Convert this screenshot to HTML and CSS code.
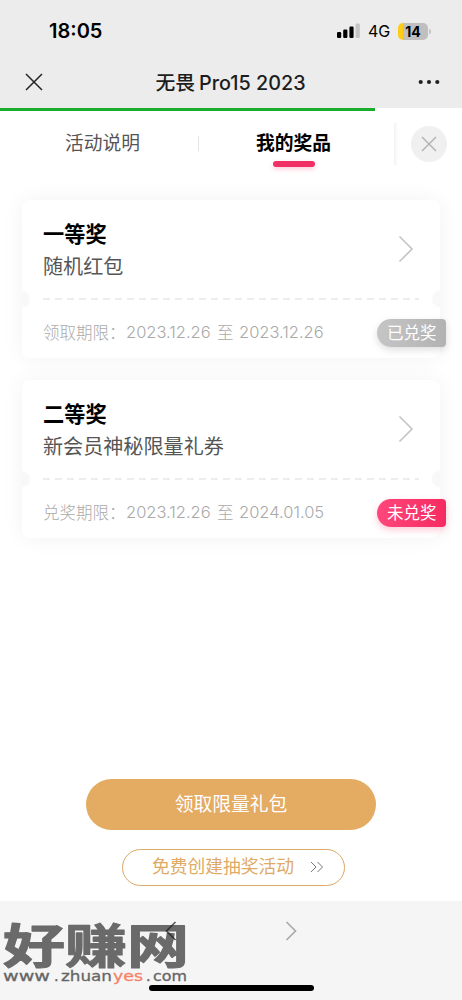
FILE: index.html
```
<!DOCTYPE html>
<html lang="zh-CN">
<head>
<meta charset="utf-8">
<meta name="viewport" content="width=device-width, initial-scale=1">
<title>无畏Pro15 2023</title>
<link rel="stylesheet" href="styles.css">
</head>
<body>
<div class="screen">
  <header class="top">
    <div class="status">
      <span class="clock">18:05</span>
      <div class="indicators">
        <svg class="signal" width="24" height="16" viewBox="0 0 24 16"><rect x="0" y="9" width="4.2" height="6" rx="1.2"/><rect x="6.2" y="6.5" width="4.2" height="8.5" rx="1.2"/><rect x="12.4" y="3.5" width="4.2" height="11.5" rx="1.2"/><rect class="weak" x="18.6" y="0.5" width="4.2" height="14.5" rx="1.2"/></svg>
        <span class="network">4G</span>
        <span class="battery">14</span><i class="battery-tip"></i>
      </div>
    </div>
    <nav class="nav">
      <svg class="nav-close" width="18" height="18" viewBox="0 0 18 18"><path d="M1 1L17 17M17 1L1 17"/></svg>
      <h1 class="title"><span>无畏</span><span class="latin">Pro15 2023</span></h1>
      <svg class="more" width="22" height="6" viewBox="0 0 22 6"><circle cx="2.7" cy="3" r="2.1"/><circle cx="11" cy="3" r="2.1"/><circle cx="19.3" cy="3" r="2.1"/></svg>
    </nav>
  </header>
  <div class="progress"><div class="progress-bar"></div></div>

  <div class="tabs">
    <div class="tab">活动说明</div>
    <div class="tab-divider"></div>
    <div class="tab active">我的奖品</div>
    <div class="close-area"><button class="close"><svg width="16" height="16" viewBox="0 0 16 16"><path d="M1 1L15 15M15 1L1 15"/></svg></button></div>
  </div>

  <main class="list">
    <article class="ticket">
      <div class="prize">
        <div><h2>一等奖</h2><p>随机红包</p></div>
        <svg class="chevron" width="16" height="28" viewBox="0 0 16 28"><path d="M1.5 1.5L14 14L1.5 26.5"/></svg>
      </div>
      <div class="tear"><svg width="376" height="2" viewBox="0 0 376 2"><path d="M0 1H376"/></svg></div>
      <div class="validity"><span class="label">领取期限：</span><span class="date">2023.12.26</span><span class="to">至</span><span class="date">2023.12.26</span><b class="badge used">已兑奖</b></div>
    </article>
    <article class="ticket">
      <div class="prize">
        <div><h2>二等奖</h2><p>新会员神秘限量礼券</p></div>
        <svg class="chevron" width="16" height="28" viewBox="0 0 16 28"><path d="M1.5 1.5L14 14L1.5 26.5"/></svg>
      </div>
      <div class="tear"><svg width="376" height="2" viewBox="0 0 376 2"><path d="M0 1H376"/></svg></div>
      <div class="validity"><span class="label">兑奖期限：</span><span class="date">2023.12.26</span><span class="to">至</span><span class="date">2024.01.05</span><b class="badge">未兑奖</b></div>
    </article>
  </main>

  <div class="actions">
    <button class="claim">领取限量礼包</button>
    <button class="create">免费创建抽奖活动<svg width="14" height="12" viewBox="0 0 14 12"><path d="M1 1L6 6L1 11M7.5 1L12.5 6L7.5 11"/></svg></button>
  </div>

  <footer class="toolbar">
    <svg class="watermark" width="200" height="78" viewBox="0 0 200 78">
      <g transform="translate(3 52.5) scale(1 .76)"><text class="mark" x="0" y="0" textLength="186" lengthAdjust="spacing">好赚网</text></g>
      <g class="site"><text x="3" y="71" textLength="47" lengthAdjust="spacingAndGlyphs">www</text><text x="54" y="71">.</text><text x="61" y="71" textLength="51" lengthAdjust="spacingAndGlyphs">zhuan</text><text class="accent" x="113" y="71" textLength="30" lengthAdjust="spacingAndGlyphs">yes</text><text x="146" y="71">.</text><text x="153" y="71" textLength="34" lengthAdjust="spacingAndGlyphs">com</text></g>
    </svg>
    <svg class="back" width="12" height="20" viewBox="0 0 12 20"><path d="M10.5 1L1.5 10L10.5 19"/></svg>
    <svg class="forward" width="12" height="20" viewBox="0 0 12 20"><path d="M1.5 1L10.5 10L1.5 19"/></svg>
    <div class="home-bar"></div>
  </footer>
</div>
</body>
</html>
```
FILE: styles.css
```
* { box-sizing: border-box; }
body { margin: 0; background: #fff; font-family: Inter, "Noto Sans CJK SC", sans-serif; }
h1, h2, p { margin: 0; }
button { margin: 0; padding: 0; border: 0; font: inherit; }
svg { display: block; fill: none; flex: none; }
.screen { width: 462px; height: 1000px; display: flex; flex-direction: column; overflow: hidden; }

.top { height: 108px; background: #ececec; }
.status { height: 56px; padding: 6px 32px 0 49px; display: flex; align-items: center; justify-content: space-between; }
.clock { font-size: 20px; font-weight: 600; line-height: 24px; }
.indicators { display: flex; align-items: center; }
.signal { fill: #000; }
.signal .weak { fill: #c4c4c4; }
.network { margin-left: 7px; font-size: 16px; width: 30px; line-height: 20px; }
.battery { width: 30px; height: 17px; border-radius: 5px; background: linear-gradient(90deg, #fccc18 5px, #bfbfbf 5px); font-size: 14px; font-weight: 700; line-height: 17px; text-align: center; }
.battery-tip { width: 2px; height: 5px; margin: 0 -1px 0 1px; border-radius: 0 2px 2px 0; background: #c4c4c4; }
.nav { height: 52px; padding: 0 22px 0 25px; display: flex; align-items: center; justify-content: space-between; }
.nav-close { stroke: #222; stroke-width: 1.5; }
.title { display: flex; gap: 4px; align-items: center; padding-top: 2px; font-size: 19.8px; font-weight: 500; line-height: 28px; color: #1d1d1d; }
.more { fill: #222; }
.progress { height: 3px; flex: none; }
.progress-bar { width: 375px; height: 3px; background: #1aad2c; }

.tabs { height: 65px; display: grid; grid-template-columns: 198px 1px 189px 74px; align-items: center; font-size: 18.75px; color: #555; }
.tab { display: flex; justify-content: center; padding-left: 7px; line-height: 28px; }
.tab-divider { height: 15px; background: #e5e5e5; }
.tab.active { position: relative; padding-left: 0; color: #000; font-weight: 600; }
.tab.active::after { content: ""; position: absolute; left: 74px; top: 31px; width: 42px; height: 6px; border-radius: 3px; background: #f03064; box-shadow: 0 2px 5px #f0306444; }
.close-area { height: 42px; margin-left: 6px; display: flex; align-items: center; padding-left: 17px; background: linear-gradient(90deg, #f2f2f2, #fff 4px); }
.close { width: 36px; height: 36px; border-radius: 50%; background: #f0f0f0; display: grid; place-items: center; }
.close svg { stroke: #b0b0b0; stroke-width: 1.4; }

.list { height: 603px; padding: 24px 22px 0; display: flex; flex-direction: column; gap: 22px; }
.ticket { height: 158px; border-radius: 7px; background: radial-gradient(circle at 0 99px, #f8f8f8 7px, transparent 9px), radial-gradient(circle at 418px 99px, #f8f8f8 7px, transparent 9px), #fff; box-shadow: 0 0 22px rgba(0, 0, 0, .055); }
.prize { height: 98px; padding: 20px 26px 0 21px; display: flex; justify-content: space-between; }
.prize h2 { font-size: 21.2px; font-weight: 700; line-height: 28px; color: #000; }
.prize p { margin-top: 4px; font-size: 20.1px; line-height: 30px; color: #555; }
.chevron { margin-top: 15px; stroke: #c6c6c6; stroke-width: 1.7; }
.tear { height: 2px; padding: 0 21px; }
.tear path { stroke: #e8e8e8; stroke-width: 1.5; stroke-dasharray: 7 5; }
.validity { position: relative; height: 58px; padding: 6px 0 0 21px; display: flex; align-items: center; font-size: 16.5px; font-weight: 300; color: #aaa; }
.label { width: 83px; }
.date { width: 91px; letter-spacing: 0; }
.to { width: 22px; }
.badge { position: absolute; right: -6px; top: 19px; width: 69px; height: 28px; border-radius: 14px 4px 4px 14px; background: linear-gradient(90deg, #ff477b, #f52b60); box-shadow: 0 3px 7px rgba(245, 43, 96, .25); padding-left: 10px; color: #fff; font-size: 16.5px; font-weight: 400; line-height: 28px; }
.badge.used { background: linear-gradient(90deg, #c5c5c5, #b2b2b2); box-shadow: 0 3px 7px rgba(0, 0, 0, .13); }

.actions { height: 122px; display: flex; flex-direction: column; align-items: center; gap: 19px; }
.claim { width: 290px; height: 51px; border-radius: 26px; background: #e4ab62; color: #fff; font-size: 18.8px; line-height: 48px; }
.create { width: 223px; height: 37px; margin-left: 5px; border: 1px solid #dba866; border-radius: 19px; background: #fff; color: #dfaa65; display: flex; align-items: center; padding: 0 0 2px 29px; gap: 16px; font-size: 17.75px; line-height: 32px; }
.create svg { stroke: #777; stroke-width: 1; }

.toolbar { position: relative; height: 99px; background: #f5f5f5; display: flex; padding: 20px 0 0 165px; gap: 108px; }
.back, .forward { position: relative; stroke: #aaa; stroke-width: 1.7; }
.back { stroke: rgba(25, 25, 25, .7); }
.watermark { position: absolute; left: 0; top: 9px; }
.mark { font-family: "Noto Sans CJK SC", sans-serif; font-size: 62px; font-weight: 700; fill: #6a6a6a; stroke: #6a6a6a; stroke-width: 1.5; stroke-linejoin: round; }
.site { font-family: "DejaVu Sans", sans-serif; font-size: 14.5px; fill: #666; stroke: #666; stroke-width: .3; }
.site .accent { fill: #f58268; stroke: #f58268; }
.home-bar { position: absolute; left: 149px; top: 84px; width: 165px; height: 6px; border-radius: 3px; background: #000; }
```
